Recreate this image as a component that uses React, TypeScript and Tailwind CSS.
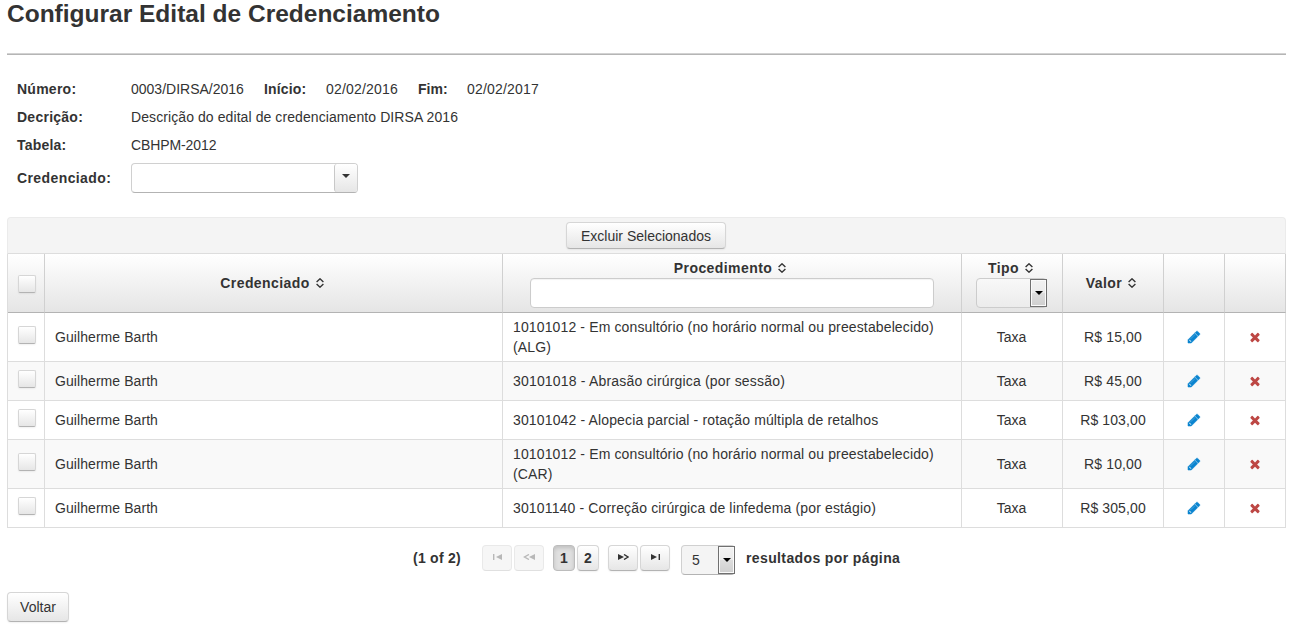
import React from "react";

const raised =
  "border border-[#d6d6d6] border-b-[#b3b3b3] bg-gradient-to-b from-white to-[#e6e6e6] shadow-[0_1px_2px_rgba(0,0,0,0.06)]";
const cols = "grid grid-cols-[37px_458px_459px_101px_101px_61px_61px]";
const cell = "flex items-center border-r border-b border-[#dddddd]";
const centered = "justify-center pr-[1px]";
const headCell =
  "flex flex-col items-center justify-center border-r border-b border-r-[#d0d0d0] border-b-[#b3b3b3] bg-gradient-to-b from-white to-[#e5e5e5] font-bold";
const headLabel = "flex items-center gap-[6px] tracking-[0.42px]";

const rows = [
  { proc: "10101012 - Em consultório (no horário normal ou preestabelecido) (ALG)", valor: "R$ 15,00", tall: true, track: "tracking-[0.13px]" },
  { proc: "30101018 - Abrasão cirúrgica (por sessão)", valor: "R$ 45,00", tall: false, track: "tracking-[0.18px]" },
  { proc: "30101042 - Alopecia parcial - rotação múltipla de retalhos", valor: "R$ 103,00", tall: false, track: "tracking-[0.14px]" },
  { proc: "10101012 - Em consultório (no horário normal ou preestabelecido) (CAR)", valor: "R$ 10,00", tall: true, track: "tracking-[0.13px]" },
  { proc: "30101140 - Correção cirúrgica de linfedema (por estágio)", valor: "R$ 305,00", tall: false, track: "tracking-[0.15px]" },
];

function CheckBox() {
  return <span className={`block h-[18px] w-[18px] rounded-[2px] ${raised}`} />;
}

function SortIcon() {
  return (
    <svg width="8" height="10" viewBox="0 0 8 10" fill="none" stroke="#333" strokeWidth="1.4">
      <path d="M0.6 4L4 0.8L7.4 4M0.6 6L4 9.2L7.4 6" />
    </svg>
  );
}

function Pencil() {
  return (
    <svg width="14" height="14" viewBox="0 0 1792 1792" fill="#0a84d0" stroke="#0a84d0" strokeWidth="70">
      <path d="M491 1536l91-91-235-235-91 91v107h128v128h107zm523-928q0-22-22-22-10 0-17 7l-542 542q-7 7-7 17 0 22 22 22 10 0 17-7l542-542q7-7 7-17zm-54-192l416 416-832 832h-416v-416zm683 96q0 53-37 90l-166 166-416-416 166-165q36-38 90-38 53 0 91 38l235 234q37 39 37 91z" />
    </svg>
  );
}

function Cross() {
  return (
    <svg width="14" height="14" viewBox="0 0 1792 1792" fill="#bd4744">
      <path d="M1490 1322q0 40-28 68l-136 136q-28 28-68 28t-68-28l-294-294-294 294q-28 28-68 28t-68-28l-136-136q-28-28-28-68t28-68l294-294-294-294q-28-28-28-68t28-68l136-136q28-28 68-28t68 28l294 294 294-294q28-28 68-28t68 28l136 136q28 28 28 68t-28 68l-294 294 294 294q28 28 28 68z" />
    </svg>
  );
}

function Caret({ color }: { color: string }) {
  return (
    <svg width="8" height="4" viewBox="0 0 8 4" fill={color}>
      <path d="M0 0H8L4 4Z" />
    </svg>
  );
}

function NativeArrow() {
  return (
    <span className="-mr-[1px] flex h-[28px] w-[17px] items-center justify-center border border-[#707070] bg-[linear-gradient(#f2f2f2_0%,#ebebeb_50%,#dddddd_50%,#cfcfcf_100%)] shadow-[inset_0_0_0_1px_#fafafa]">
      <Caret color="#000" />
    </span>
  );
}

function PagerIcon({ d, line, color = "#333" }: { d: string; line: string; color?: string }) {
  return (
    <svg width="12" height="6" viewBox="0 0 12 6" fill={color}>
      <path d={d} />
      <path d={line} fill="none" stroke={color} strokeWidth="1.4" />
    </svg>
  );
}

const pagerBtn = `flex h-[26px] justify-center rounded-[4px] ${raised}`;
const pagerOff = "flex h-[26px] justify-center rounded-[4px] border border-[#e9e9e9] border-b-[#e0e0e0] bg-[#f6f6f6]";

export default function App() {
  return (
    <div className="h-[626px] w-[1294px] overflow-hidden bg-white pl-[7px] font-['Liberation_Sans',Arial,sans-serif] text-[14px] leading-[20px] text-[#333333]">
      <h1 className="h-[53px] text-[24.5px] leading-[27px] font-bold">Configurar Edital de Credenciamento</h1>
      <div className="h-[2px] w-[1279px] border-t border-[#d2d2d2] bg-[#b5b5b5]" />

      <div className="mt-[20px] grid grid-cols-[114px_1fr] grid-rows-[28px_28px_28px_38px] items-center pl-[10px]">
        <b className="tracking-[0.25px]">Número:</b>
        <div className="flex">
          <span className="w-[133px]">0003/DIRSA/2016</span>
          <b className="w-[62px] tracking-[0.15px]">Início:</b>
          <span className="w-[92px] tracking-[0.2px]">02/02/2016</span>
          <b className="w-[49px]">Fim:</b>
          <span className="tracking-[0.2px]">02/02/2017</span>
        </div>
        <b className="tracking-[0.25px]">Decrição:</b>
        <span className="tracking-[0.085px]">Descrição do edital de credenciamento DIRSA 2016</span>
        <b className="tracking-[0.2px]">Tabela:</b>
        <span className="tracking-[-0.1px]">CBHPM-2012</span>
        <b className="tracking-[0.4px]">Credenciado:</b>
        <div className="flex h-[30px] w-[227px] justify-end rounded-[4px] border border-[#d0d0d0] border-b-[#b3b3b3] bg-white">
          <span className="flex w-[23px] justify-center rounded-[3px] border-l border-[#c8c8c8] bg-gradient-to-b from-white to-[#e6e6e6] pt-[10px]">
            <Caret color="#333" />
          </span>
        </div>
      </div>

      <div className="mt-[20px] w-[1279px]">
        <div className="flex h-[37px] items-center justify-center rounded-t-[4px] border border-[#ebebeb] border-b-[#dddddd] bg-[#f4f4f4] pr-[1px]">
          <button className={`h-[27px] w-[160px] rounded-[4px] ${raised}`}>Excluir Selecionados</button>
        </div>
        <div className="border-l border-[#dddddd]">
          <div className={`${cols} h-[59px]`}>
            <div className={`${headCell} pt-[2px] pl-[2px]`}><CheckBox /></div>
            <div className={headCell}>
              <div className={`${headLabel} pr-[3px]`}>Credenciado<SortIcon /></div>
            </div>
            <div className={headCell}>
              <div className={`${headLabel} pr-[4px]`}>Procedimento<SortIcon /></div>
              <div className="h-[30px] w-[404px] rounded-[4px] border border-[#cccccc] bg-white shadow-[inset_0_1px_1px_rgba(0,0,0,0.05)]" />
            </div>
            <div className={headCell}>
              <div className={`${headLabel} pr-[3px]`}>Tipo<SortIcon /></div>
              <div className="mr-[1px] flex h-[30px] w-[71px] justify-end rounded-[4px] border border-[#cccccc] bg-gradient-to-b from-[#f8f8f8] to-[#ececec]">
                <NativeArrow />
              </div>
            </div>
            <div className={headCell}>
              <div className={`${headLabel} pr-[4px]`}>Valor<SortIcon /></div>
            </div>
            <div className={headCell} />
            <div className={headCell} />
          </div>
          {rows.map((r, i) => (
            <div key={i} className={`${cols} ${r.tall ? "h-[49px]" : "h-[39px]"} ${i % 2 ? "bg-[#f9f9f9]" : "bg-white"}`}>
              <div className={`${cell} justify-center pb-[4px] pl-[2px]`}><CheckBox /></div>
              <div className={`${cell} pl-[10px] tracking-[0.07px]`}>Guilherme Barth</div>
              <div className={`${cell} px-[10px] ${r.track}`}>{r.proc}</div>
              <div className={`${cell} ${centered}`}>Taxa</div>
              <div className={`${cell} justify-center tracking-[0.12px]`}>{r.valor}</div>
              <div className={`${cell} ${centered}`}><Pencil /></div>
              <div className={`${cell} ${centered}`}><Cross /></div>
            </div>
          ))}
        </div>
      </div>

      <div className="mt-[17px] flex h-[30px] items-start pl-[406px] font-bold">
        <span className="w-[69px] pt-[3px] tracking-[0.25px]">(1 of 2)</span>
        <span className={`${pagerOff} mr-[2px] w-[30px] pt-[8px]`}>
          <PagerIcon d="M11 0V6L5 3Z" line="M2.7 0V6" color="#b8b8b8" />
        </span>
        <span className={`${pagerOff} mr-[9px] w-[30px] pt-[8px]`}>
          <PagerIcon d="M12 0V6L6 3Z" line="M6 0.5L1.5 3L6 5.5" color="#b8b8b8" />
        </span>
        <span className="mr-[2px] flex h-[26px] w-[22px] items-center justify-center rounded-[4px] border border-[#bcbcbc] bg-[#e0e0e0] shadow-[inset_0_2px_4px_rgba(0,0,0,0.15)]">1</span>
        <span className={`${pagerBtn} mr-[9px] w-[22px] items-center`}>2</span>
        <span className={`${pagerBtn} mr-[2px] w-[30px] pt-[8px]`}>
          <PagerIcon d="M1 0V6L7 3Z" line="M7 0.5L11 3L7 5.5" />
        </span>
        <span className={`${pagerBtn} mr-[11px] w-[30px] pt-[8px]`}>
          <PagerIcon d="M2 0V6L8 3Z" line="M10.3 0V6" />
        </span>
        <span className="flex h-[30px] w-[54px] justify-between rounded-[4px] border border-[#d0d0d0] border-b-[#b3b3b3] bg-[#f4f4f4] pl-[10px] font-normal">
          <span className="pt-[4px]">5</span>
          <NativeArrow />
        </span>
        <span className="pt-[3px] pl-[11px] tracking-[0.38px]">resultados por página</span>
      </div>

      <button className={`mt-[17px] h-[30px] w-[62px] rounded-[4px] ${raised}`}>Voltar</button>
    </div>
  );
}
